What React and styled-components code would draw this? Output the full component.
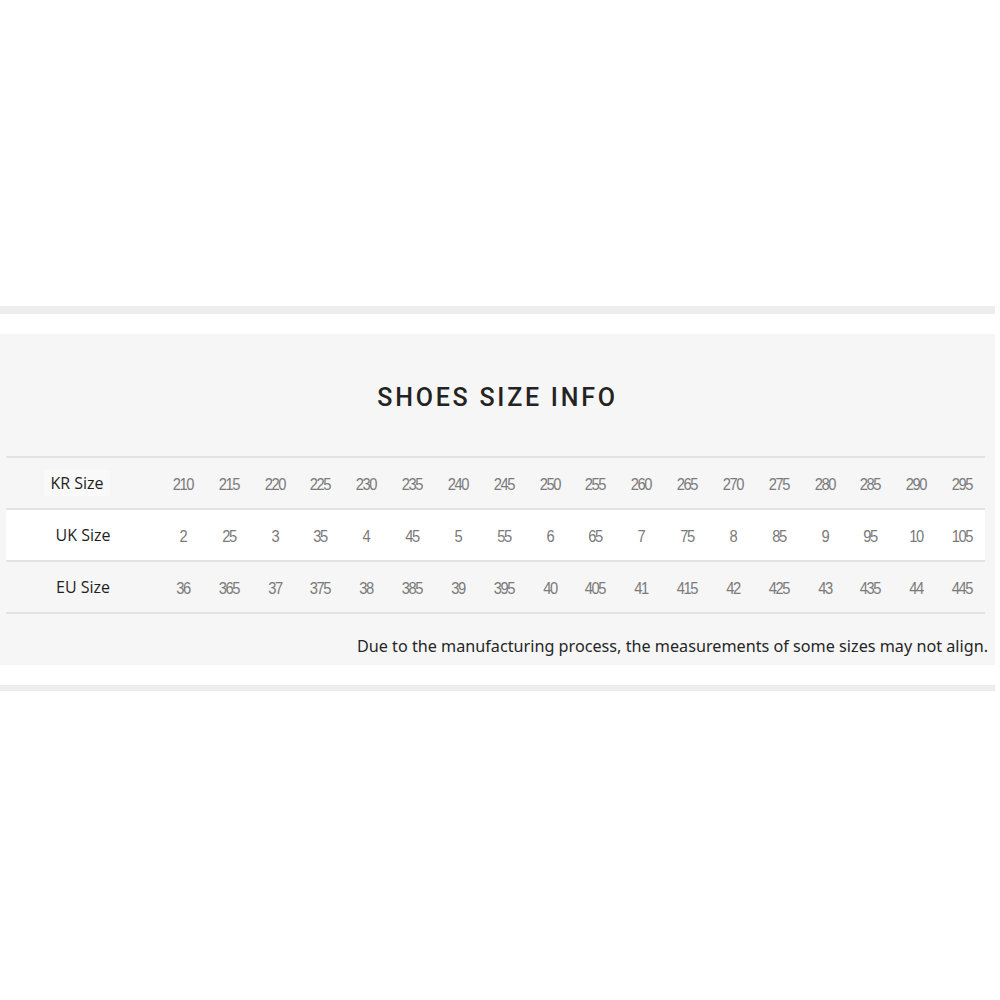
import React from "react";
import styled, { createGlobalStyle } from "styled-components";

const Global = createGlobalStyle`
  html, body { margin: 0; padding: 0; background: #ffffff; }
  body { font-family: "Noto Sans", "Liberation Sans", sans-serif; }
`;

const Page = styled.div`
  width: 1000px;
  height: 1000px;
  padding-top: 306px;
  box-sizing: border-box;
  display: flex;
  flex-direction: column;
`;

const Rule = styled.div`
  width: 995px;
  height: ${(p) => p.$h}px;
  background: #eceeee;
  flex: none;
`;

const Spacer = styled.div`
  height: ${(p) => p.$h}px;
  flex: none;
`;

const Panel = styled.section`
  width: 995px;
  height: 331px;
  background: #f6f6f6;
  box-sizing: border-box;
  padding-top: 50px;
  display: flex;
  flex-direction: column;
  flex: none;
`;

const Title = styled.h2`
  margin: 0;
  font-family: Roboto, "Liberation Sans", sans-serif;
  font-weight: 500;
  font-size: 25px;
  line-height: 28px;
  letter-spacing: 2.75px;
  color: #232323;
  text-align: center;
`;

const Table = styled.div`
  margin: 44px 0 0 6px;
  width: 979px;
  border-top: 2px solid #e3e3e3;
`;

const Row = styled.div`
  display: grid;
  grid-template-columns: 154px repeat(18, 1fr);
  align-items: center;
  height: 50px;
  border-bottom: 2px solid #e3e3e3;
  background: ${(p) => (p.$light ? "#ffffff" : "transparent")};
`;

const Label = styled.div`
  justify-self: center;
  font-family: "Open Sans", "Noto Sans", sans-serif;
  font-size: 16px;
  color: #1e1e1e;
  padding: 2px 6px;
  margin-left: ${(p) => p.$shift || 0}px;
  background: ${(p) => (p.$box ? "#f9f9f9" : "transparent")};
`;

const Cell = styled.div`
  text-align: center;
  font-family: "Liberation Sans", Arial, sans-serif;
  font-size: 16px;
  letter-spacing: -1.6px;
  color: #7a7a7a;
  transform: scaleX(0.92);
  padding-top: 3px;
`;

const Note = styled.p`
  margin: 21px 0 0;
  align-self: flex-end;
  padding-right: 7px;
  font-family: "Noto Sans", "Open Sans", sans-serif;
  font-size: 16.2px;
  letter-spacing: 0px;
  color: #262626;
`;

const rows = [
  {
    label: "KR Size",
    shift: -12,
    box: true,
    values: ["210","215","220","225","230","235","240","245","250","255","260","265","270","275","280","285","290","295"],
  },
  {
    label: "UK Size",
    shift: 0,
    light: true,
    values: ["2","2.5","3","3.5","4","4.5","5","5.5","6","6.5","7","7.5","8","8.5","9","9.5","10","10.5"],
  },
  {
    label: "EU Size",
    shift: 0,
    values: ["36","36.5","37","37.5","38","38.5","39","39.5","40","40.5","41","41.5","42","42.5","43","43.5","44","44.5"],
  },
];

export default function App() {
  return (
    <>
      <Global />
      <Page>
        <Rule $h={8} />
        <Spacer $h={20} />
        <Panel>
          <Title>SHOES SIZE INFO</Title>
          <Table>
            {rows.map((r) => (
              <Row key={r.label} $light={r.light}>
                <Label $shift={r.shift} $box={r.box}>{r.label}</Label>
                {r.values.map((v, i) => (
                  <Cell key={i}>{v.replace(".", "")}</Cell>
                ))}
              </Row>
            ))}
          </Table>
          <Note>
            Due to the manufacturing process, the measurements of some sizes may not align.
          </Note>
        </Panel>
        <Spacer $h={20} />
        <Rule $h={6} />
      </Page>
    </>
  );
}
